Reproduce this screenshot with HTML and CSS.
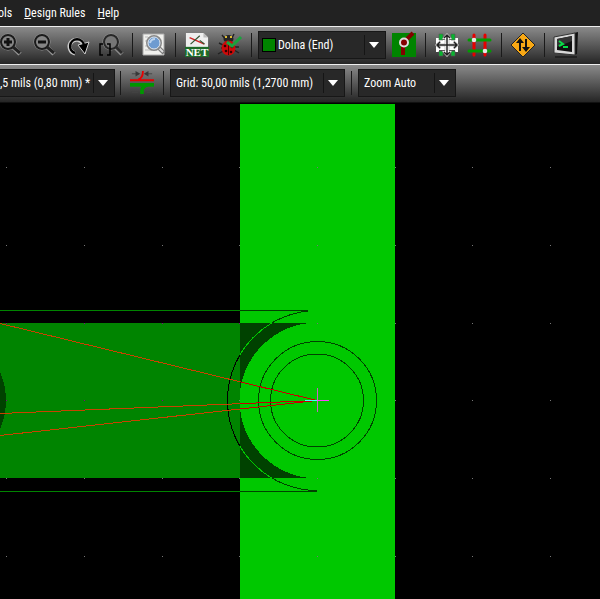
FILE: index.html
```html
<!DOCTYPE html>
<html lang="en">
<head>
<meta charset="utf-8">
<title>Board editor</title>
<link rel="stylesheet" href="styles.css">
</head>
<body>
<nav class="menu">
  <a href="#" class="cut">ols</a>
  <a href="#"><u>D</u>esign Rules</a>
  <a href="#"><u>H</u>elp</a>
</nav>
<div class="toolbar">
  <button aria-label="Zoom in"><svg viewBox="0 0 24 24"><path d="M13 14l7 7" stroke="#999" stroke-width="4.5"/><circle cx="8" cy="9" r="7" fill="#888" stroke="#999" stroke-width="3"/><circle cx="8" cy="9" r="7" fill="#858585" stroke="#1b1b1b" stroke-width="2"/><path d="M13 14l7 6" stroke="#222" stroke-width="3"/><path d="M8 5v8M4 9h8" stroke="#111" stroke-width="3"/></svg></button>
  <button aria-label="Zoom out"><svg viewBox="0 0 24 24"><path d="M14 14l7 7" stroke="#999" stroke-width="4.500"/><circle cx="9" cy="9" r="7" fill="#888" stroke="#999" stroke-width="3"/><circle cx="9" cy="9" r="7" fill="#858585" stroke="#1b1b1b" stroke-width="2"/><path d="M14 14l7 6" stroke="#222" stroke-width="3"/><path d="M5 9h8" stroke="#111" stroke-width="3"/></svg></button>
  <button aria-label="Redraw"><svg viewBox="0 0 24 24"><path d="M9 20.500A7 7 0 1 1 17 11" fill="none" stroke="#ccc" stroke-width="4"/><path d="M12 12l11-3-4 12z" fill="#000" stroke="#ccc"/><path d="M9 20A7 7 0 1 1 18 12" fill="none" stroke="#000" stroke-width="2.500"/></svg></button>
  <button aria-label="Zoom to fit"><svg viewBox="0 0 24 24"><path d="M17 15l6 6" stroke="#888" stroke-width="4.5"/><circle cx="12" cy="9" r="7" fill="#777" stroke="#999" stroke-width="3"/><circle cx="12" cy="9" r="7" fill="#777" stroke="#282828" stroke-width="2"/><path d="M17 14l6 6" stroke="#2c2c2c" stroke-width="3"/><path d="M4 11H1v11h3M8 11h3v11H8" fill="none" stroke="#000" stroke-width="1.500"/></svg></button>
  <span class="sep"></span>
  <button aria-label="Find"><svg viewBox="0 0 24 24"><path d="M1 1h21v21H1z" fill="#f0f0ed" stroke="#aaa"/><path d="M3 4h3M3 8h2M3 13h3M3 17h12" stroke="#bbb"/><path d="M17 15l5 5" stroke="#777" stroke-width="4"/><path d="M17 15l4 4" stroke="#ddd" stroke-width="2"/><circle cx="12" cy="10" r="7" fill="#6e9bd0" stroke="#888" stroke-width="2"/><circle cx="12" cy="10" r="6" fill="none" stroke="#dce6f2"/><path d="M8 10q1-4 5-4" fill="none" stroke="#bdd4ee" stroke-width="2"/></svg></button>
  <span class="sep"></span>
  <button aria-label="Netlist"><svg viewBox="0 0 26 26"><path d="M1 0h19l5 5v20H1z" fill="#eee"/><path d="M20 0v5h5z" fill="#bbb"/><path d="M5 5l16 7" stroke="#c22" stroke-width="1.5"/><path d="M6 12l10-9M16 8l5 4" stroke="#353" stroke-width="1.3"/><path d="M0 15h26v11H0z" fill="#1e6b29"/><text x="13" y="25" class="net">NET</text></svg></button>
  <button aria-label="Design rules check"><svg viewBox="0 0 24 24"><path d="M4 2l4 5M16 1l-3 6M1 10l6 3M0 21l7-4M21 20l-5-3M3 15h4M17 14h4" stroke="#222" stroke-width="1.4"/><ellipse cx="10.500" cy="6" rx="5" ry="4" fill="#252525"/><path d="M7 4h2M12 4h2" stroke="#db3" stroke-width="2"/><ellipse cx="10.500" cy="15" rx="7" ry="7.500" fill="#cc0a0a"/><path d="M10.500 8v14" stroke="#500"/><g fill="#300"><circle cx="7" cy="13" r="1.300"/><circle cx="8" cy="18" r="1.300"/><circle cx="14" cy="14" r="1.300"/><circle cx="13" cy="19" r="1.300"/></g><path d="M9 9l5 4 9-9" fill="none" stroke="#19a33b" stroke-width="3"/></svg></button>
  <span class="sep"></span>
  <div class="combo layer"><span class="swatch"></span><select aria-label="Layer"><option>Dolna (End)</option></select></div>
  <button aria-label="Via and track"><svg viewBox="0 0 24 24"><path d="M0 0h24v24H0z" fill="#008400"/><path d="M11 22V10L21 0" fill="none" stroke="#840000" stroke-width="4"/><circle cx="12" cy="9.500" r="4" fill="#840000" stroke="#ddd" stroke-width="2"/></svg></button>
  <span class="sep"></span>
  <button aria-label="Footprint mode"><svg viewBox="0 0 24 24"><path d="M1 5h3v2h15V5h4v14h-3v-2H4v2H1z" fill="#fff"/><path d="M4 1h4v6H4zM16 1h4v6h-4zM4 18h4v5H4zM16 18h4v5h-4z" fill="#08b52f" stroke="#555" stroke-width=".6"/><path d="M12 0l5 6h-3v5h5V8l5 4-5 4v-3h-5v5h3l-5 6-5-6h3v-5H5v3l-5-4 5-4v3h5V6H7z" fill="#fff" stroke="#888" stroke-width=".5"/><path d="M12 2v20M2 12h20M9 5l3-3 3 3M9 19l3 3 3-3M5 9l-3 3 3 3M19 9l3 3-3 3" fill="none" stroke="#222" stroke-width="1.5"/></svg></button>
  <button aria-label="Track mode"><svg viewBox="0 0 24 24"><path d="M6 2v20M17 2v20" stroke="#e60000" stroke-width="3" stroke-linecap="round"/><path d="M1 7h21M1 18h21" stroke="#009b00" stroke-width="3" stroke-linecap="round"/><circle cx="6" cy="7" r="2.300" fill="#e5e5e5"/><circle cx="17" cy="18" r="2.300" fill="#e5e5e5"/></svg></button>
  <span class="sep"></span>
  <button aria-label="Router"><svg viewBox="0 0 24 24"><path d="M12 0l12 12-12 12L0 12z" fill="#f8a815" stroke="#222" stroke-linejoin="round"/><path d="M9 18V8M15 6v10" stroke="#111" stroke-width="2"/><path d="M5 10l4-5 4 5zM11 14h8l-4 5z" fill="#111"/></svg></button>
  <span class="sep"></span>
  <button aria-label="Scripting console"><svg viewBox="0 0 24 24"><path d="M1 24h22" stroke="#222" stroke-width="2"/><path d="M20 0l4-1-1 22-3 1z" fill="#111"/><path d="M0 4l21-4v22L0 20z" fill="#d8d8d8" stroke="#333"/><path d="M3 6l15-3v16L3 17z" fill="#111"/><path d="M3 6l15-3v5L3 14z" fill="#333"/><path d="M5 8l4 3-4 2M9 14h5" fill="none" stroke="#08dd47" stroke-width="2"/></svg></button>
</div>
<div class="toolbar">
  <div class="combo track"><select aria-label="Track width"><option>,5 mils (0,80 mm) *</option></select></div>
  <span class="sep"></span>
  <button aria-label="Auto track width"><svg viewBox="0 0 26 26"><path d="M2 3h8M24 3h-7M2 23h7M24 23h-6" stroke="#444"/><path d="M6 0l5 3-5 3zM20 0l-5 3 5 3z" fill="#383838"/><path d="M0 10h26M9 9q5-1 5-9" fill="none" stroke="#e60000" stroke-width="2"/><path d="M0 15h26" stroke="#009600" stroke-width="4"/><path d="M13 25v-4q0-4 6-6" fill="none" stroke="#009600" stroke-width="4"/></svg></button>
  <span class="sep"></span>
  <div class="combo grid"><select aria-label="Grid"><option>Grid: 50,00 mils (1,2700 mm)</option></select></div>
  <span class="sep"></span>
  <div class="combo zoom"><select aria-label="Zoom"><option>Zoom Auto</option></select></div>
</div>
<main class="board">
  <svg role="img" aria-label="Board tracks" shape-rendering="crispEdges">
    <defs>
      <clipPath id="crescent"><path d="M240 323H309A78 78 0 0 0 309 478H240z"/></clipPath>
      <clipPath id="onTrack"><path d="M0 323H240V478H0z"/></clipPath>
    </defs>
    <g transform="translate(0 -103)">
      <path d="M240 104H395V700H240z" fill="#00c800"/>
      <path d="M240 323H309V478H240z" fill="#004200"/>
      <circle cx="317.500" cy="400.500" r="78" fill="#00c800"/>
      <path d="M0 323H240V478H0z" fill="#008400"/>
      <circle cx="-65" cy="400.500" r="71" fill="#004200"/>
      <path d="M0 310.500H240M0 491.500H240" stroke="#008400"/>
      <path d="M240 310.500H308M240 491.500H317" stroke="#004200"/>
      <g fill="none">
        <path d="M308 311A90 90 0 0 0 317.500 490.500" stroke="#004200"/>
        <path d="M308 311A90 90 0 0 0 317.500 490.500" stroke="#000" clip-path="url(#onTrack)"/>
        <path d="M308 311A90 90 0 0 0 317.500 490.500" stroke="#00c800" clip-path="url(#crescent)"/>
        <circle cx="317.500" cy="400.500" r="59" stroke="#004200"/>
        <circle cx="317" cy="400.500" r="46.500" stroke="#004200"/>
        <path d="M0 323.500L317 400.500M0 413.500L317 400.500M0 435.500L317 400.500" stroke="#c80000"/>
        <path d="M0 323.500L317 400.500M0 413.500L317 400.500M0 435.500L317 400.500" stroke="#c84200" clip-path="url(#onTrack)"/>
      </g>
      <g fill="#777">
        <path d="M6 167h1v1h-1zM84 167h1v1h-1zM162 167h1v1h-1zM239 167h1v1h-1zM317 167h1v1h-1zM395 167h1v1h-1zM472 167h1v1h-1zM550 167h1v1h-1z" id="row"/>
        <use href="#row" y="78"/><use href="#row" y="156"/><use href="#row" y="233"/><use href="#row" y="311"/><use href="#row" y="389"/>
      </g>
      <path d="M6 323h1v1h-1zM84 323h1v1h-1zM162 323h1v1h-1zM239 323h1v1h-1zM6 400h1v1h-1zM84 400h1v1h-1zM162 400h1v1h-1z" fill="#840084"/>
      <path d="M317.500 388V412" stroke="#c863c8"/><path d="M317 400.500H329" stroke="#ff42ff"/><path d="M305 400.500H317" stroke="#42ffff"/>
    </g>
  </svg>
</main>
</body>
</html>
```
FILE: styles.css
```css
* { box-sizing: border-box; }
body {
  margin: 0;
  height: 100vh;
  display: flex;
  flex-direction: column;
  overflow: hidden;
  background: #000;
  color: #fff;
  font: 12px/18px "Roboto Condensed", "Liberation Sans Narrow", "Liberation Sans", sans-serif;
}
.menu {
  display: flex;
  gap: 12px;
  height: 26px;
  padding-top: 4px;
  background: #222;
  flex: none;
}
.menu a { color: inherit; text-decoration: none; white-space: nowrap; }
.menu .cut { margin-left: -2px; }
.toolbar {
  display: flex;
  align-items: center;
  gap: 9px;
  height: 38px;
  padding-bottom: 1px;
  flex: none;
  border-top: 1px solid #eee;
  background: linear-gradient(#8a8a8a, #252525);
}
.toolbar + .toolbar { height: 39px; border-bottom: 1px solid #111; }
.toolbar button {
  flex: none;
  width: 24px;
  height: 24px;
  padding: 0;
  border: 0;
  background: none;
}
.toolbar button svg { display: block; width: 100%; height: 100%; fill: none; overflow: visible; }
.net { font: bold 12px "Liberation Serif", serif; fill: #fff; text-anchor: middle; }
.sep { width: 1px; height: 24px; background: #1a1a1a; flex: none; }
.combo {
  position: relative;
  display: flex;
  align-items: center;
  gap: 5px;
  flex: none;
  height: 28px;
  margin: 0 -3px;
  padding-left: 5px;
  border: 1px solid #171717;
  background: #282828;
}
.combo select {
  appearance: none;
  flex: 1;
  min-width: 0;
  height: 26px;
  padding: 0;
  border: 0;
  background: none;
  color: inherit;
  font: inherit;
}
.combo::after {
  content: "";
  position: absolute;
  right: 6px;
  top: 10px;
  border: 5px solid transparent;
  border-top: 6px solid #fff;
  border-bottom: 0;
}
.combo::before {
  content: "";
  position: absolute;
  right: 20px;
  top: 3px;
  bottom: 3px;
  border-left: 1px solid #151515;
}
.layer { width: 128px; padding-left: 3px; gap: 2px; }
.swatch { width: 14px; height: 14px; border: 1px solid #000; background: #008400; }
.track { width: 115px; margin-left: 0; margin-right: -4px; padding-left: 0; border-left: 0; }
.grid { width: 175px; }
.zoom { width: 98px; }
.board { flex: 1; min-height: 0; }
.board svg { display: block; width: 100%; height: 100%; }
```
